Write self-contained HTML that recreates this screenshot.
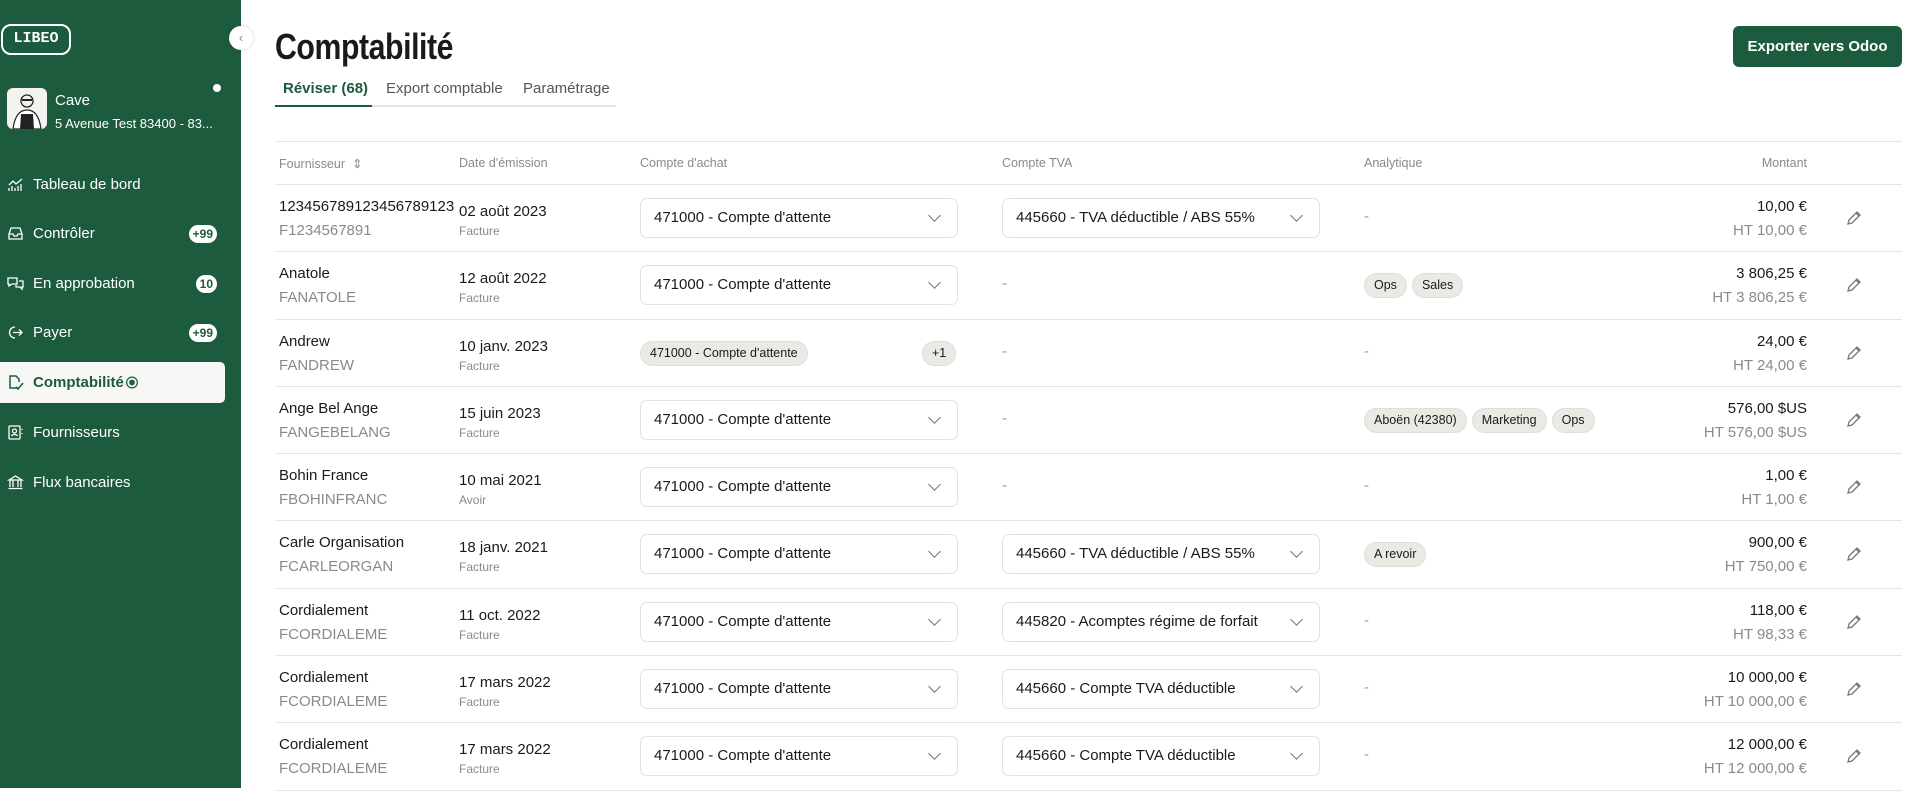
<!DOCTYPE html>
<html><head><meta charset="utf-8"><style>
*{box-sizing:border-box;margin:0;padding:0}
body{width:1920px;height:788px;overflow:hidden;font-family:"Liberation Sans",sans-serif;background:#fff;position:relative;color:#1a1a1a}
.sb{position:absolute;left:0;top:0;width:241px;height:788px;background:#1d5b3e;color:#fff}
.logo{position:absolute;left:1px;top:24px;width:70px;height:31px;border:2.5px solid #fff;border-radius:10px;font-family:"Liberation Mono",monospace;font-weight:bold;font-size:15px;text-align:center;line-height:26px;letter-spacing:0}
.coll{position:absolute;left:229px;top:26px;width:24px;height:24px;border-radius:50%;background:#fff;box-shadow:0 0 3px rgba(0,0,0,.2);color:#888;font-size:13px;text-align:center;line-height:23px}
.av{position:absolute;left:7px;top:88px;width:40px;height:41px;border-radius:6px;background:#f3f2ee;overflow:hidden}
.nm{position:absolute;left:55px;top:92px;font-size:15px}
.ad{position:absolute;left:55px;top:116px;font-size:13px}
.dot{position:absolute;left:213px;top:84px;width:8px;height:8px;border-radius:50%;background:#fff}
.nav{position:absolute;left:0;width:225px;height:41px;font-size:15px;display:flex;align-items:center;padding-left:7px}
.nav svg{width:17px;height:17px;margin-right:9px;flex:none}
.nav.act{background:#f7f7f5;color:#1d5b3e;font-weight:bold;border-radius:0 5px 5px 0}
.bd{position:absolute;right:8px;top:12px;background:#fff;color:#1d5b3e;font-weight:bold;font-size:12px;border-radius:9px;padding:2px 4px;line-height:14px}
h1{position:absolute;left:275px;top:26px;font-size:36px;font-weight:bold;letter-spacing:-.5px;transform:scaleX(.84);transform-origin:0 0}
.tabs{position:absolute;left:275px;top:78px;width:341px;height:29px;border-bottom:2px solid #e6e5e0;font-size:15px;color:#555}
.tabs span{position:absolute;top:2px}
.tabs .a{color:#1d5b3e;font-weight:bold;left:8px}
.ul{position:absolute;left:0;top:27px;width:97px;height:2px;background:#1d5b3e}
.btn{position:absolute;left:1733px;top:26px;width:169px;height:41px;background:#1d5b3e;color:#fff;border-radius:6px;font-weight:bold;font-size:15px;text-align:center;line-height:41px}
.tbl{position:absolute;left:275px;top:141px;width:1627px;border-top:1px solid #e6e5e0}
.hd{position:relative;height:43px;border-bottom:1px solid #e6e5e0;font-size:12.5px;color:#8a8a8a}
.hd span,.r>div{position:absolute}
.r{position:relative;height:67.3px;border-bottom:1px solid #e6e5e0;font-size:15px}
.p1{left:4px;top:13px}
.p2{left:4px;top:37px;color:#8a8a8a}
.d1{left:184px;top:18px}
.d2{left:184px;top:39px;font-size:12px;color:#8a8a8a}
.sel{top:13px;height:40px;width:318px;border:1px solid #e2e1dc;border-radius:7px;padding:0 13px;line-height:38px;font-size:15px}
.sel:after{content:"";position:absolute;right:18px;top:12px;width:8px;height:8px;border-right:1.3px solid #777;border-bottom:1.3px solid #777;transform:rotate(45deg)}
.s1{left:365px}.s2{left:727px}
.dash{top:23px;color:#999}
.an{left:1089px;top:21px;display:flex;gap:5px}
.pl{background:#ebe9e3;border:1px solid #e0ded7;border-radius:13px;font-size:12.5px;padding:0 9px;height:25px;line-height:23px}
.m1{right:95px;top:13px}
.m2{right:95px;top:37px;color:#8a8a8a}
.pen{left:1570px;top:24px}
</style></head><body>
<div class="sb">
<div class="logo">LIBEO</div>
<div class="coll">‹</div>
<div class="av"><svg width="40" height="41" viewBox="0 0 40 41"><circle cx="20" cy="13" r="6" fill="none" stroke="#222" stroke-width="1.3"/><rect x="15" y="11" width="10" height="2" fill="#222"/><path d="M6 41 C8 26 14 22 20 22 C26 22 32 26 34 41Z" fill="#fff" stroke="#222" stroke-width="1.2"/><path d="M14 26 L26 26 L27 41 L13 41Z" fill="#222"/></svg></div>
<div class="nm">Cave</div>
<div class="ad">5 Avenue Test 83400 - 83...</div>
<div class="dot"></div>
<div class="nav" style="top:164px"><svg viewBox="0 0 17 17" fill="none" stroke="#fff" stroke-width="1.3"><path d="M2 9l4-4 3 3 6-5M2 15v-3M5 15v-5M8 15v-3M11 15v-5M14 15v-7"/></svg>Tableau de bord</div>
<div class="nav" style="top:213px"><svg viewBox="0 0 17 17" fill="none" stroke="#fff" stroke-width="1.3"><path d="M2 9l2-6h9l2 6v5H2zM2 9h4l1 2h3l1-2h4"/></svg>Contrôler<span class="bd">+99</span></div>
<div class="nav" style="top:263px"><svg viewBox="0 0 17 17" fill="none" stroke="#fff" stroke-width="1.3"><path d="M1 3h9v6H5l-3 2V9H1zM12 6h4v6h-1v2l-2-2h-4v-2"/></svg>En approbation<span class="bd">10</span></div>
<div class="nav" style="top:312px"><svg viewBox="0 0 17 17" fill="none" stroke="#fff" stroke-width="1.3"><path d="M8 3a5.5 5.5 0 1 0 0 11M6 8.5h9M12 5.5l3 3-3 3"/></svg>Payer<span class="bd">+99</span></div>
<div class="nav act" style="top:362px"><svg viewBox="0 0 17 17" fill="none" stroke="#1d5b3e" stroke-width="1.5"><path d="M11 14H3V2h6l3 3v3M9 13l2 2 5-6"/></svg>Comptabilité<svg viewBox="0 0 17 17" style="margin:0 0 0 1px;width:14px"><circle cx="8.5" cy="8.5" r="6.5" fill="none" stroke="#1d5b3e" stroke-width="1.5"/><circle cx="8.5" cy="8.5" r="3.5" fill="#1d5b3e"/></svg></div>
<div class="nav" style="top:412px"><svg viewBox="0 0 17 17" fill="none" stroke="#fff" stroke-width="1.3"><rect x="2" y="2" width="11" height="13" rx="1"/><circle cx="7.5" cy="7" r="2"/><path d="M4.5 12c1-2 5-2 6 0M15 5v1M15 9v1"/></svg>Fournisseurs</div>
<div class="nav" style="top:462px"><svg viewBox="0 0 17 17" fill="none" stroke="#fff" stroke-width="1.3"><path d="M2 6l6.5-4L15 6zM3 6v7M6 6v7M11 6v7M14 6v7M1.5 14.5h14"/></svg>Flux bancaires</div>
</div>
<h1>Comptabilité</h1>
<div class="tabs"><span class="a">Réviser (68)</span><span style="left:111px">Export comptable</span><span style="left:248px">Paramétrage</span><div class="ul"></div></div>
<div class="btn">Exporter vers Odoo</div>
<div class="tbl">
<div class="hd"><span style="left:4px;top:14px">Fournisseur &nbsp;⇕</span><span style="left:184px;top:14px">Date d'émission</span><span style="left:365px;top:14px">Compte d'achat</span><span style="left:727px;top:14px">Compte TVA</span><span style="left:1089px;top:14px">Analytique</span><span style="right:95px;top:14px">Montant</span></div>

<div class="r"><div class="p1">123456789123456789123</div><div class="p2">F1234567891</div><div class="d1">02 août 2023</div><div class="d2">Facture</div><div class="sel s1">471000 - Compte d'attente</div><div class="sel s2">445660 - TVA déductible / ABS 55%</div><div class="dash" style="left:1089px">-</div><div class="m1">10,00 €</div><div class="m2">HT 10,00 €</div><div class="pen"><svg width="18" height="18" viewBox="0 0 18 18" fill="none" stroke="#777" stroke-width="1.3"><path d="M3 15l1-4 8-8 3 3-8 8zM11 4l3 3"/></svg></div></div>

<div class="r"><div class="p1">Anatole</div><div class="p2">FANATOLE</div><div class="d1">12 août 2022</div><div class="d2">Facture</div><div class="sel s1">471000 - Compte d'attente</div><div class="dash" style="left:727px">-</div><div class="an"><span class="pl">Ops</span><span class="pl">Sales</span></div><div class="m1">3 806,25 €</div><div class="m2">HT 3 806,25 €</div><div class="pen"><svg width="18" height="18" viewBox="0 0 18 18" fill="none" stroke="#777" stroke-width="1.3"><path d="M3 15l1-4 8-8 3 3-8 8zM11 4l3 3"/></svg></div></div>

<div class="r"><div class="p1">Andrew</div><div class="p2">FANDREW</div><div class="d1">10 janv. 2023</div><div class="d2">Facture</div><div style="left:365px;top:21px" class="pl">471000 - Compte d'attente</div><div style="left:647px;top:21px" class="pl">+1</div><div class="dash" style="left:727px">-</div><div class="dash" style="left:1089px">-</div><div class="m1">24,00 €</div><div class="m2">HT 24,00 €</div><div class="pen"><svg width="18" height="18" viewBox="0 0 18 18" fill="none" stroke="#777" stroke-width="1.3"><path d="M3 15l1-4 8-8 3 3-8 8zM11 4l3 3"/></svg></div></div>

<div class="r"><div class="p1">Ange Bel Ange</div><div class="p2">FANGEBELANG</div><div class="d1">15 juin 2023</div><div class="d2">Facture</div><div class="sel s1">471000 - Compte d'attente</div><div class="dash" style="left:727px">-</div><div class="an"><span class="pl">Aboën (42380)</span><span class="pl">Marketing</span><span class="pl">Ops</span></div><div class="m1">576,00 $US</div><div class="m2">HT 576,00 $US</div><div class="pen"><svg width="18" height="18" viewBox="0 0 18 18" fill="none" stroke="#777" stroke-width="1.3"><path d="M3 15l1-4 8-8 3 3-8 8zM11 4l3 3"/></svg></div></div>

<div class="r"><div class="p1">Bohin France</div><div class="p2">FBOHINFRANC</div><div class="d1">10 mai 2021</div><div class="d2">Avoir</div><div class="sel s1">471000 - Compte d'attente</div><div class="dash" style="left:727px">-</div><div class="dash" style="left:1089px">-</div><div class="m1">1,00 €</div><div class="m2">HT 1,00 €</div><div class="pen"><svg width="18" height="18" viewBox="0 0 18 18" fill="none" stroke="#777" stroke-width="1.3"><path d="M3 15l1-4 8-8 3 3-8 8zM11 4l3 3"/></svg></div></div>

<div class="r"><div class="p1">Carle Organisation</div><div class="p2">FCARLEORGAN</div><div class="d1">18 janv. 2021</div><div class="d2">Facture</div><div class="sel s1">471000 - Compte d'attente</div><div class="sel s2">445660 - TVA déductible / ABS 55%</div><div class="an"><span class="pl">A revoir</span></div><div class="m1">900,00 €</div><div class="m2">HT 750,00 €</div><div class="pen"><svg width="18" height="18" viewBox="0 0 18 18" fill="none" stroke="#777" stroke-width="1.3"><path d="M3 15l1-4 8-8 3 3-8 8zM11 4l3 3"/></svg></div></div>

<div class="r"><div class="p1">Cordialement</div><div class="p2">FCORDIALEME</div><div class="d1">11 oct. 2022</div><div class="d2">Facture</div><div class="sel s1">471000 - Compte d'attente</div><div class="sel s2">445820 - Acomptes régime de forfait</div><div class="dash" style="left:1089px">-</div><div class="m1">118,00 €</div><div class="m2">HT 98,33 €</div><div class="pen"><svg width="18" height="18" viewBox="0 0 18 18" fill="none" stroke="#777" stroke-width="1.3"><path d="M3 15l1-4 8-8 3 3-8 8zM11 4l3 3"/></svg></div></div>

<div class="r"><div class="p1">Cordialement</div><div class="p2">FCORDIALEME</div><div class="d1">17 mars 2022</div><div class="d2">Facture</div><div class="sel s1">471000 - Compte d'attente</div><div class="sel s2">445660 - Compte TVA déductible</div><div class="dash" style="left:1089px">-</div><div class="m1">10 000,00 €</div><div class="m2">HT 10 000,00 €</div><div class="pen"><svg width="18" height="18" viewBox="0 0 18 18" fill="none" stroke="#777" stroke-width="1.3"><path d="M3 15l1-4 8-8 3 3-8 8zM11 4l3 3"/></svg></div></div>

<div class="r"><div class="p1">Cordialement</div><div class="p2">FCORDIALEME</div><div class="d1">17 mars 2022</div><div class="d2">Facture</div><div class="sel s1">471000 - Compte d'attente</div><div class="sel s2">445660 - Compte TVA déductible</div><div class="dash" style="left:1089px">-</div><div class="m1">12 000,00 €</div><div class="m2">HT 12 000,00 €</div><div class="pen"><svg width="18" height="18" viewBox="0 0 18 18" fill="none" stroke="#777" stroke-width="1.3"><path d="M3 15l1-4 8-8 3 3-8 8zM11 4l3 3"/></svg></div></div>
</div>
</body></html>
